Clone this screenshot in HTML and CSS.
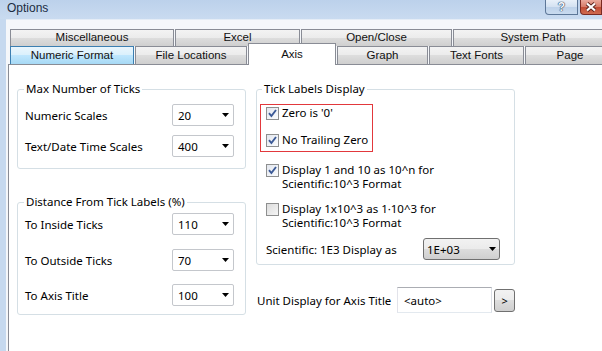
FILE: index.html
```html
<!DOCTYPE html>
<html lang="en">
<head>
  <meta charset="UTF-8" />
  <meta name="viewport" content="width=device-width, initial-scale=1.0"/>
  <title>Options</title>
  <link rel="stylesheet" href="styles.css">
</head>
<body>
<div class="window">
  <div class="titlebar">
    <span class="title">Options</span>
    <span class="cap-btn help">?</span>
    <span class="cap-btn close">
      <svg width="12" height="10" viewBox="0 0 12 10"><path d="M2 1.5L10 8.5M10 1.5L2 8.5" stroke="#5b231c" stroke-width="4"/><path d="M2 1.5L10 8.5M10 1.5L2 8.5" stroke="#fff" stroke-width="2.2"/></svg>
    </span>
  </div>

  <div class="client">
    <div class="tabrow">
      <div class="tab w-misc">Miscellaneous</div>
      <div class="tab w-excel">Excel</div>
      <div class="tab w-open">Open/Close</div>
      <div class="tab w-sys">System Path</div>
    </div>
    <div class="tabrow second">
      <div class="tab hot w-num">Numeric Format</div>
      <div class="tab w-file">File Locations</div>
      <div class="tab selected w-axis">Axis</div>
      <div class="tab w-graph">Graph</div>
      <div class="tab w-fonts">Text Fonts</div>
      <div class="tab w-page">Page</div>
    </div>

    <div class="panel">
      <div class="col-left">
        <fieldset class="group ticks">
          <legend>Max Number of Ticks</legend>
          <div class="row">
            <span class="label">Numeric Scales</span>
            <div class="combo"><span>20</span><span class="arrow"></span></div>
          </div>
          <div class="row">
            <span class="label">Text/Date Time Scales</span>
            <div class="combo"><span>400</span><span class="arrow"></span></div>
          </div>
        </fieldset>

        <fieldset class="group distance">
          <legend>Distance From Tick Labels (%)</legend>
          <div class="row">
            <span class="label">To Inside Ticks</span>
            <div class="combo"><span>110</span><span class="arrow"></span></div>
          </div>
          <div class="row r2">
            <span class="label">To Outside Ticks</span>
            <div class="combo"><span>70</span><span class="arrow"></span></div>
          </div>
          <div class="row r3">
            <span class="label">To Axis Title</span>
            <div class="combo"><span>100</span><span class="arrow"></span></div>
          </div>
        </fieldset>
      </div>

      <div class="col-right">
        <fieldset class="group labels">
          <legend>Tick Labels Display</legend>
          <div class="redbox">
            <div class="chk-row">
              <span class="check on"><svg width="11" height="11" viewBox="0 0 11 11"><path d="M2 5.2L4.4 8L9 2" fill="none" stroke="#3b5996" stroke-width="1.9"/></svg></span>
              <span>Zero is '0'</span>
            </div>
            <div class="chk-row gap">
              <span class="check on"><svg width="11" height="11" viewBox="0 0 11 11"><path d="M2 5.2L4.4 8L9 2" fill="none" stroke="#3b5996" stroke-width="1.9"/></svg></span>
              <span>No Trailing Zero</span>
            </div>
          </div>
          <div class="chk-row multi">
            <span class="check on"><svg width="11" height="11" viewBox="0 0 11 11"><path d="M2 5.2L4.4 8L9 2" fill="none" stroke="#3b5996" stroke-width="1.9"/></svg></span>
            <span>Display 1 and 10 as 10^n for<br>Scientific:10^3 Format</span>
          </div>
          <div class="chk-row multi">
            <span class="check"></span>
            <span>Display 1x10^3 as 1&middot;10^3 for<br>Scientific:10^3 Format</span>
          </div>
          <div class="sci-row">
            <span class="sci-label">Scientific: 1E3 Display as</span>
            <div class="combo button"><span>1E+03</span><span class="arrow"></span></div>
          </div>
        </fieldset>

        <div class="unit-row">
          <span class="unit-label">Unit Display for Axis Title</span>
          <div class="textbox">&lt;auto&gt;</div>
          <div class="more">&gt;</div>
        </div>
      </div>
    </div>
  </div>
</div>
</body>
</html>
```

FILE: styles.css
```css
* {
  box-sizing: border-box;
}
body {
  margin: 0;
  font-family: "Noto Sans", "Liberation Sans", sans-serif;
  font-size: 11.5px;
  color: #000;
  background: #c6d9ef;
}
.window {
  width: 602px;
  height: 351px;
  overflow: hidden;
  display: flex;
  flex-direction: column;
  background: #c6d9ef;
}

/* title bar */
.titlebar {
  height: 19px;
  flex-shrink: 0;
  display: flex;
  align-items: flex-start;
  background: linear-gradient(#bcd1eb, #c9dbf0);
}
.title {
  font-family: "Liberation Sans", sans-serif;
  font-size: 12px;
  line-height: 14px;
  color: #1b2c42;
  padding: 1px 0 0 7px;
}
.cap-btn {
  height: 15px;
  display: flex;
  align-items: center;
  justify-content: center;
  border: 1px solid #5d7798;
  border-top: none;
}
.help {
  margin-left: auto;
  width: 33px;
  border-radius: 0 0 0 4px;
  background: linear-gradient(#e8f0f9, #d3e1f1 50%, #bdd1e9 50%, #c9dbef);
  font-family: "Liberation Sans", sans-serif;
  font-weight: bold;
  font-size: 12px;
  color: #f4f7fb;
  text-shadow: 0 0 1px #2c4563, 0 0 1px #2c4563, 0 0 1px #2c4563;
}
.close {
  margin-left: 2px;
  width: 22px;
  border-color: #7a2a22;
  border-radius: 0 0 0 4px;
  background: linear-gradient(#e9a99c, #d77a67 50%, #c24b34 50%, #cf6a4f);
}

/* client area */
.client {
  flex: 1;
  margin-left: 6px;
  padding-top: 9px;
  display: flex;
  flex-direction: column;
  background: #f5f7fa;
  border-top: 1px solid #e4ecf6;
}
.tabrow {
  display: flex;
  padding-left: 4px;
  flex-shrink: 0;
}
.tab {
  flex-shrink: 0;
  height: 17px;
  margin-right: 1px;
  border: 1px solid #898c95;
  border-bottom: none;
  background: linear-gradient(#f3f3f3, #ebebeb 50%, #dddddd 50%, #cfcfcf);
  font-family: "Liberation Sans", sans-serif;
  font-size: 11.5px;
  line-height: 15px;
  text-align: center;
  color: #111;
}
.second .tab {
  height: 18px;
  line-height: 16px;
}
.tab.hot {
  border-color: #3c7fb1;
  background: linear-gradient(#eaf6fd, #d9f0fc 50%, #bee6fd 50%, #a7d9f5);
}
.second .tab.selected {
  position: relative;
  z-index: 1;
  height: 22px;
  margin-top: -3px;
  margin-bottom: -1px;
  padding-top: 2px;
  background: #fff;
}
.w-misc { width: 164px; }
.w-excel { width: 125px; }
.w-open { width: 151px; }
.w-sys { width: 160px; }
.w-num { width: 124px; }
.w-file { width: 112px; }
.w-axis { width: 88px; }
.w-graph { width: 91px; }
.w-fonts { width: 95px; }
.w-page { width: 90px; }

/* tab page */
.panel {
  flex: 1;
  margin-left: 2px;
  padding: 17px 0 0 8px;
  display: flex;
  gap: 10px;
  background: #fff;
  border-top: 1px solid #898c95;
  border-left: 1px solid #898c95;
}
.col-left {
  width: 229px;
  flex-shrink: 0;
  display: flex;
  flex-direction: column;
}
.col-right {
  width: 259px;
  flex-shrink: 0;
}
.group {
  margin: 0;
  min-width: 0;
  border: 1px solid #d5dfe5;
  border-radius: 3px;
}
.group legend {
  padding: 0 2px;
  line-height: 14px;
}
.ticks {
  padding: 8px 11px 11px 7px;
}
.ticks legend,
.distance legend {
  margin-left: -1px;
}
.distance {
  margin-top: 26px;
  padding: 4px 11px 8px 7px;
}
.row {
  display: flex;
  align-items: center;
  height: 22px;
}
.ticks .row + .row {
  margin-top: 9px;
}
.distance .r2 {
  margin-top: 14px;
}
.distance .r3 {
  margin-top: 13px;
}
.label {
  width: 147px;
  flex-shrink: 0;
}
.combo {
  width: 62px;
  height: 22px;
  display: flex;
  align-items: center;
  justify-content: space-between;
  padding: 0 4px 0 5px;
  border: 1px solid #c4c7cc;
  border-radius: 2px;
  background: #fff;
}
.arrow {
  width: 7px;
  height: 4px;
  background: #000;
  clip-path: polygon(0 0, 100% 0, 50% 100%);
}

/* tick labels group */
.labels {
  padding: 8px 14px 4px 3px;
}
.labels legend {
  margin-left: 2px;
}
.redbox {
  width: 113px;
  padding: 0 0 3px 5px;
  border: 1px solid #e2383c;
}
.chk-row {
  display: flex;
  align-items: flex-start;
  gap: 3px;
  line-height: 16px;
}
.chk-row.gap {
  margin-top: 11px;
}
.check {
  width: 13px;
  height: 13px;
  margin-top: 2px;
  flex-shrink: 0;
  border: 1px solid #8e8f8f;
  background: linear-gradient(135deg, #dcdcdc, #f6f6f6);
  display: flex;
}
.check.on {
  background: linear-gradient(135deg, #e2e6ee, #fbfcfd);
}
.chk-row.multi {
  margin: 11px 0 0 6px;
  line-height: 14px;
}
.chk-row.multi .check {
  margin-top: 1px;
}
.sci-row {
  margin: 8px 0 0 6px;
  display: flex;
  align-items: center;
}
.sci-label {
  width: 157px;
  flex-shrink: 0;
}
.combo.button {
  width: 77px;
  padding: 0 3px;
  border-color: #707070;
  border-radius: 3px;
  background: linear-gradient(#f2f2f2, #ebebeb 50%, #dddddd 50%, #cfcfcf);
}

/* unit display */
.unit-row {
  margin-top: 22px;
  display: flex;
  align-items: center;
}
.unit-label {
  width: 141px;
  flex-shrink: 0;
  padding-left: 1px;
}
.textbox {
  width: 96px;
  height: 26px;
  padding-left: 6px;
  display: flex;
  align-items: center;
  border: 1px solid;
  border-color: #abadb3 #dbdfe6 #e3e9ef #e2e3ea;
}
.more {
  width: 21px;
  height: 23px;
  margin-left: 2px;
  display: flex;
  align-items: center;
  justify-content: center;
  border: 1px solid #707070;
  border-radius: 3px;
  background: linear-gradient(#f2f2f2, #ebebeb 50%, #dddddd 50%, #cfcfcf);
  font-size: 11px;
}
```
